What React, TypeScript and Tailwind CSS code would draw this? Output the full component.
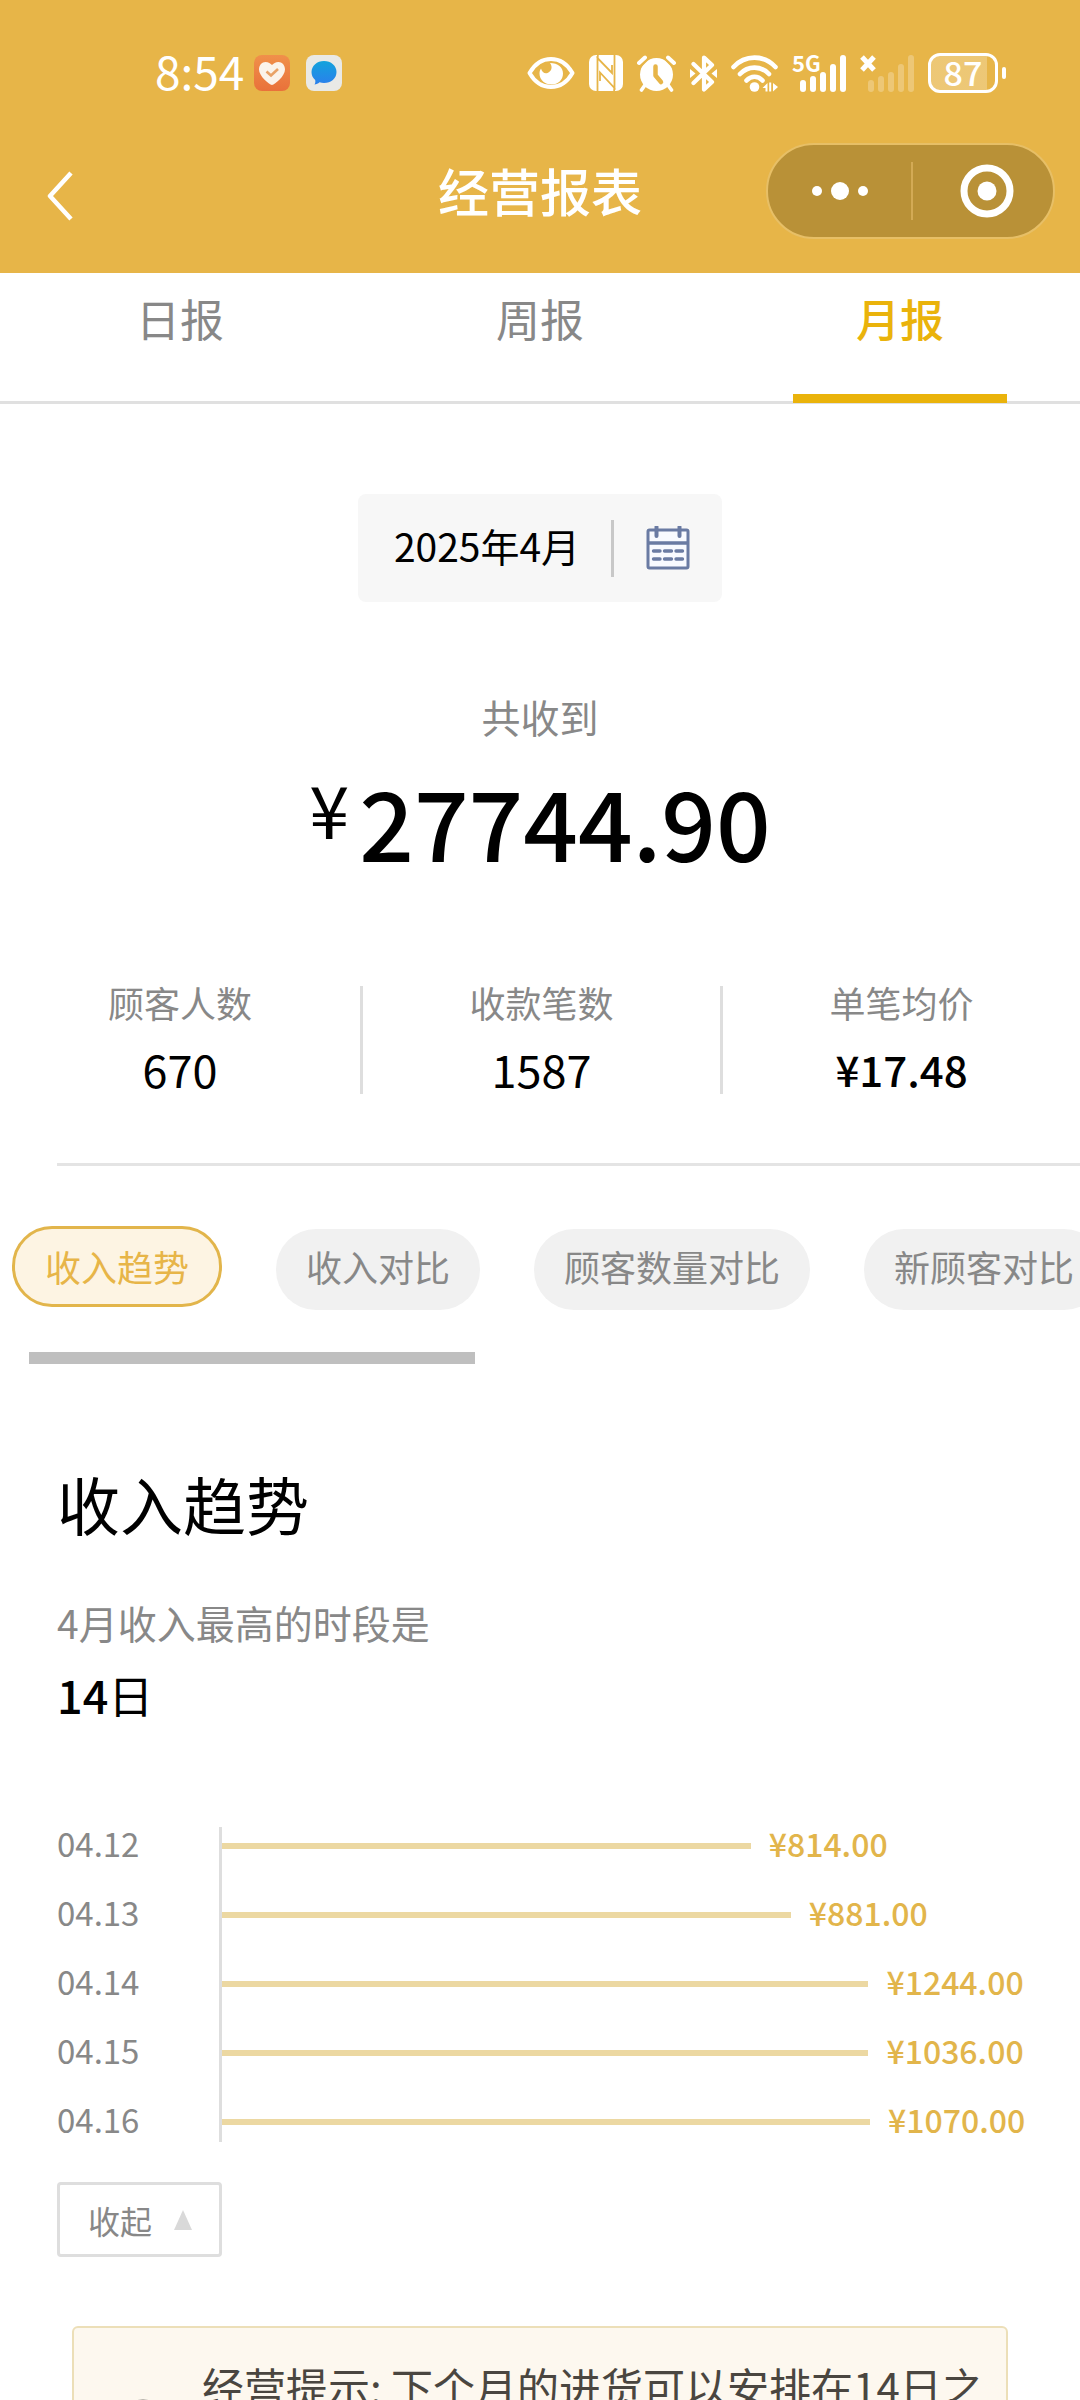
import React, { useState } from "react";

const tabs = ["日报", "周报", "月报"];
const chips = ["收入趋势", "收入对比", "顾客数量对比", "新顾客对比"];

const rows = [
  { date: "04.12", amount: "¥814.00", share: 66 },
  { date: "04.13", amount: "¥881.00", share: 71 },
  { date: "04.14", amount: "¥1244.00", share: 80.7 },
  { date: "04.15", amount: "¥1036.00", share: 80.7 },
  { date: "04.16", amount: "¥1070.00", share: 80.9 },
];

function HeartAppIcon() {
  return (
    <svg width="36" height="36" viewBox="0 0 36 36" aria-hidden="true">
      <defs>
        <linearGradient id="heartBg" x1="0" y1="0" x2="0" y2="1">
          <stop offset="0" stopColor="#f0904a" />
          <stop offset="1" stopColor="#e9713a" />
        </linearGradient>
      </defs>
      <rect width="36" height="36" rx="8" fill="url(#heartBg)" />
      <path d="M18 30C15 29.500 5 21 5 14.500C5 10 8 7 11.500 7C14.500 7 16.500 8.500 18 10C19.500 8.500 21.500 7 24.500 7C28 7 31 10 31 14.500C31 21 21 29.500 18 30Z" fill="#fbf3ea" />
      <path d="M12.500 16.500L17 20.500L24 14" fill="none" stroke="#e9a266" strokeWidth="2.600" />
    </svg>
  );
}

function ChatAppIcon() {
  return (
    <svg width="36" height="36" viewBox="0 0 36 36" aria-hidden="true">
      <defs>
        <linearGradient id="chatBg" x1="0" y1="0" x2="0" y2="1">
          <stop offset="0" stopColor="#12a3dc" />
          <stop offset="1" stopColor="#2b7fec" />
        </linearGradient>
      </defs>
      <rect width="36" height="36" rx="8" fill="#e9e9e6" />
      <path d="M18 6C25 6 30.500 10.800 30.500 17C30.500 23.500 25 28 18 28C16.500 28 15 27.800 13.500 27.300C12 28.600 10.500 29.400 8.500 29.600C9.400 28 9.500 26.500 9.200 25C6.800 23 5.500 20.200 5.500 17C5.500 10.800 11 6 18 6Z" fill="url(#chatBg)" />
    </svg>
  );
}

function EyeIcon() {
  return (
    <svg width="48" height="34" viewBox="0 0 48 34" fill="none" aria-hidden="true">
      <path d="M2.500 17C8 7.500 15.500 3 24 3C32.500 3 40 7.500 45.500 17C40 26.500 32.500 31 24 31C15.500 31 8 26.500 2.500 17Z" stroke="#fff" strokeWidth="4" strokeLinejoin="round" />
      <path d="M23 7C31 7 36 11.500 36 17.500C36 24 31 28.500 24.500 28.500C18 28.500 12.500 24 12.500 17.500C12.500 15.500 13 14 14 12.500C15 16 17.500 18 20.500 17C24.500 15.500 26 11 23 7Z" fill="#fff" />
    </svg>
  );
}

function NfcIcon() {
  return (
    <svg width="34" height="36" viewBox="0 0 34 36" fill="none" aria-hidden="true">
      <rect width="34" height="36" rx="7" fill="#fff" />
      <path d="M8.500 36V3L23 18V10M25.500 0V33L11 17.500V26" stroke="#e7b548" strokeWidth="1.800" />
      <path d="M8.500 3L9 0M25.500 33L25 36" stroke="#e7b548" strokeWidth="1.800" />
    </svg>
  );
}

function AlarmIcon() {
  return (
    <svg width="39" height="37" viewBox="0 0 39 37" fill="none" aria-hidden="true">
      <circle cx="19.500" cy="19.500" r="16.500" fill="#fff" />
      <path d="M0 10L10 0M39 10L29 0" stroke="#e7b548" strokeWidth="9" />
      <path d="M2 8L8 2.500M37 8L31 2.500" stroke="#fff" strokeWidth="4" strokeLinecap="round" />
      <path d="M8 30L4.500 35M31 30L34.500 35" stroke="#fff" strokeWidth="3.600" strokeLinecap="round" />
      <path d="M18.500 11.500V20.500L24 27" stroke="#e7b548" strokeWidth="4.500" strokeLinecap="round" strokeLinejoin="round" />
    </svg>
  );
}

function BluetoothIcon() {
  return (
    <svg width="27" height="37" viewBox="0 0 27 37" fill="none" aria-hidden="true">
      <path d="M3.500 9L22 27L14 34.500V2.500L22 10L3.500 28" stroke="#fff" strokeWidth="4.200" strokeLinejoin="round" strokeLinecap="round" />
      <path d="M0 14L5.500 18.500L0 23ZM27 14L21.500 18.500L27 23Z" fill="#fff" />
    </svg>
  );
}

function WifiIcon() {
  return (
    <svg width="48" height="37" viewBox="0 0 48 37" fill="none" aria-hidden="true">
      <path d="M2.500 12C14 -0.500 33 -0.500 44.500 12" stroke="#fff" strokeWidth="4.600" strokeLinecap="round" />
      <path d="M9 19C17 10.500 30 10.500 38 19" stroke="#fff" strokeWidth="4.600" strokeLinecap="round" />
      <path d="M15.500 25.500C20 20.500 27 20.500 31.500 25.500" stroke="#fff" strokeWidth="4.600" strokeLinecap="round" />
      <circle cx="23.500" cy="32" r="4.800" fill="#fff" />
      <path d="M31.500 33L36.500 28V36.500H34.500V33ZM42 28L47 32L42 36.500Z" fill="#fff" />
      <path d="M39.200 27.500V36.500" stroke="#fff" strokeWidth="2" />
    </svg>
  );
}

function SignalBars() {
  return (
    <svg width="46" height="37" viewBox="0 0 46 37" fill="#fff" aria-hidden="true">
      <rect x="0" y="25" width="6" height="12" rx="3" />
      <rect x="10" y="21" width="6" height="16" rx="3" />
      <rect x="20" y="17" width="6" height="20" rx="3" />
      <rect x="30" y="9" width="6" height="28" rx="3" />
      <rect x="40" y="0" width="6" height="37" rx="3" />
    </svg>
  );
}

function BatteryIcon() {
  return (
    <div className="flex items-center gap-1">
      <div className="flex h-10 w-[70px] rounded-xl border-[3px] border-white bg-linear-to-r from-white/25 from-87% to-transparent to-87%">
        <span className="w-full text-center text-[34px] leading-[32px] font-medium">87</span>
      </div>
      <div className="h-3 w-1 rounded-full bg-white" />
    </div>
  );
}

function CalendarIcon() {
  return (
    <svg width="44" height="44" viewBox="0 0 44 44" fill="none" stroke="#6a7ba3" aria-hidden="true">
      <rect x="2" y="4" width="40" height="38" rx="1.500" fill="#f8faff" strokeWidth="3" />
      <path d="M2 17H42" strokeWidth="3.600" />
      <path d="M10.500 1V10M33.500 1V10" strokeWidth="4" strokeLinecap="round" />
      <path d="M7.500 25H14M18.500 25H25.500M30 25H36.500M7.500 33H14M18.500 33H25.500M30 33H36.500" strokeWidth="3.400" strokeLinecap="round" />
    </svg>
  );
}

function StatusBar() {
  return (
    <div className="flex h-[146px] items-center justify-between pr-[74px] pl-[155px]">
      <div className="flex items-center">
        <span className="w-[99px] pb-1.5 text-[46px] leading-none">8:54</span>
        <div className="flex gap-4">
          <HeartAppIcon />
          <ChatAppIcon />
        </div>
      </div>
      <div className="flex items-center">
        <div className="flex items-center gap-[14px]">
          <EyeIcon />
          <NfcIcon />
          <AlarmIcon />
          <BluetoothIcon />
          <WifiIcon />
        </div>
        <div className="relative ml-[21px]">
          <SignalBars />
          <span className="absolute -top-1 -left-2 text-[22px] leading-none font-bold">5G</span>
        </div>
        <div className="relative mr-[14px] ml-[22px]">
          <div className="opacity-25">
            <SignalBars />
          </div>
          <svg className="absolute top-0 -left-2" width="16" height="17" viewBox="0 0 16 17" aria-hidden="true">
            <path d="M2 2L14 15M14 2L2 15" stroke="#fff" strokeWidth="5" />
          </svg>
        </div>
        <BatteryIcon />
      </div>
    </div>
  );
}

function NavBar() {
  return (
    <div className="relative flex h-[127px] items-start justify-between pr-[25px] pl-[39px]">
      <button type="button" aria-label="返回" className="mt-[17px] p-2">
        <svg width="26" height="50" viewBox="0 0 26 50" fill="none" aria-hidden="true">
          <path d="M24 2L3 25L24 48" stroke="#fff" strokeWidth="4.500" strokeLinejoin="round" />
        </svg>
      </button>
      <h1 className="pointer-events-none absolute inset-x-0 top-[19px] text-center text-[51px] leading-[50px] font-medium">经营报表</h1>
      <div className="-mt-[3px] flex h-24 w-[289px] items-center rounded-full border-2 border-[#e7bf66] bg-[#b99137]">
        <button type="button" aria-label="更多" className="flex h-full w-[143px] items-center justify-center">
          <svg width="58" height="20" viewBox="0 0 58 20" fill="#fff" aria-hidden="true">
            <circle cx="6" cy="10" r="5" />
            <circle cx="29" cy="10" r="9" />
            <circle cx="52" cy="10" r="5" />
          </svg>
        </button>
        <div className="h-[58px] w-0.5 bg-[#d3aa55]" />
        <button type="button" aria-label="关闭" className="flex h-full flex-1 items-center justify-center pl-2">
          <svg width="54" height="54" viewBox="0 0 54 54" fill="none" aria-hidden="true">
            <circle cx="27" cy="27" r="23" stroke="#fff" strokeWidth="7" />
            <circle cx="27" cy="27" r="9.500" fill="#fff" />
          </svg>
        </button>
      </div>
    </div>
  );
}

function Stat({ label, value, strong, divided }: { label: string; value: string; strong?: boolean; divided?: boolean }) {
  return (
    <div className={divided ? "border-l-[3px] border-[#dedede] text-center" : "text-center"}>
      <dt className="text-[36px] leading-8 text-[#888]">{label}</dt>
      <dd className={strong ? "pt-[26px] text-[42px] leading-[50px] font-medium" : "pt-[26px] text-[45px] leading-[50px]"}>{value}</dd>
    </div>
  );
}

export default function App() {
  const [tab, setTab] = useState("月报");
  const [chip, setChip] = useState("收入趋势");
  const [open, setOpen] = useState(true);

  return (
    <div className="flex h-screen flex-col overflow-hidden bg-white font-['Noto_Sans_CJK_SC',sans-serif] text-black">
      <header className="shrink-0 bg-[#e7b548] text-white">
        <StatusBar />
        <NavBar />
      </header>

      <main className="min-h-0 flex-1 overflow-x-hidden overflow-y-auto [scrollbar-width:none]">
        <nav className="grid h-[131px] grid-cols-3 border-b-[3px] border-[#e0e0e0]">
          {tabs.map((t) => (
            <button
              key={t}
              type="button"
              onClick={() => setTab(t)}
              className={
                tab === t
                  ? "relative flex justify-center pt-[23px] text-[44px] leading-[44px] font-medium text-[#eab30b]"
                  : "relative flex justify-center pt-[23px] text-[44px] leading-[44px] text-[#888]"
              }
            >
              {t}
              {tab === t && <span className="absolute inset-x-[73px] -bottom-0.5 h-[9px] bg-[#eab30b]" />}
            </button>
          ))}
        </nav>

        <section className="flex flex-col items-center pt-[90px]">
          <button type="button" className="flex h-[108px] items-center rounded-lg bg-[#f7f7f7] pr-8 pl-9">
            <span className="pb-1.5 text-[39px] leading-10">2025年4月</span>
            <span className="mr-8 ml-[31px] h-[57px] w-[3px] bg-[#c8c8c8]" />
            <CalendarIcon />
          </button>
          <p className="pt-[94px] text-[39px] leading-10 text-[#888]">共收到</p>
          <p className="flex items-start pt-[38px]">
            <span className="text-[72px] leading-[68px]">¥</span>
            <span className="pl-2.5 text-[96px] leading-[94px] font-medium">27744.90</span>
          </p>
        </section>

        <dl className="grid grid-cols-3 pt-[118px]">
          <Stat label="顾客人数" value="670" />
          <Stat label="收款笔数" value="1587" divided />
          <Stat label="单笔均价" value="¥17.48" strong divided />
        </dl>
        <hr className="mt-[69px] ml-[57px] border-t-[3px] border-[#e4e4e4]" />

        <div className="flex items-baseline gap-[54px] overflow-x-auto pt-[60px] pl-3 [scrollbar-width:none]">
          {chips.map((c) => (
            <button
              key={c}
              type="button"
              onClick={() => setChip(c)}
              className={
                chip === c
                  ? "shrink-0 rounded-[40px] border-[3px] border-[#e2b54b] bg-[#fdf4e3] px-[30px] pt-[19px] pb-5 text-[36px] leading-9 text-[#e7b548]"
                  : "shrink-0 rounded-[40px] bg-[#f1f1f1] px-[30px] pt-[19px] pb-[26px] text-[36px] leading-9 text-[#888]"
              }
            >
              {c}
            </button>
          ))}
        </div>
        <div className="mt-[42px] ml-[29px] h-3 w-[41.300%] bg-[#bfbfbf]" />

        <section className="px-[57px] pt-[105px]">
          <h2 className="text-[63px] leading-[68px]">收入趋势</h2>
          <p className="pt-[65px] text-[39px] leading-10 text-[#888]">4月收入最高的时段是</p>
          <p className="pt-[29px] text-[45px] leading-[48px]">
            <span className="font-medium">14</span>日
          </p>

          <div className="mt-[90px] grid grid-cols-[162px_1fr]">
            <div className="text-[33px] leading-[69px] text-[#888]">
              {rows.map((r) => (
                <div key={r.date}>{r.date}</div>
              ))}
            </div>
            <div className="mt-[18px] mb-3 flex flex-col gap-[31px] border-l-[3px] border-[#dedede]">
              {rows.map((r) => (
                <div key={r.date} className="flex h-[38px] items-center">
                  <div className="h-1.5 shrink-0 bg-[#ecd8a2]" style={{ width: `${r.share}%` }} />
                  <span className="pb-1.5 pl-[18px] text-[32px] leading-8 font-medium text-[#e2b54b]">{r.amount}</span>
                </div>
              ))}
            </div>
          </div>

          <button
            type="button"
            onClick={() => setOpen(!open)}
            className="mt-7 flex h-[75px] w-[165px] items-center justify-between rounded border-[3px] border-[#dedede] pr-[27px] pl-7 text-[32px] text-[#888]"
          >
            {open ? "收起" : "展开"}
            <svg width="18" height="20" viewBox="0 0 18 20" aria-hidden="true">
              <path d="M9 0L18 20H0Z" fill="#d9d9d9" />
            </svg>
          </button>
        </section>

        <aside className="mx-[72px] mt-[69px] flex items-start rounded-md border-2 border-[#ecdfb8] bg-[#fdf8ef] pt-7 pr-4 pb-9 pl-10">
          <svg className="mt-[43px] shrink-0" width="58" height="58" viewBox="0 0 58 58" fill="none" stroke="#77736c" strokeWidth="3" aria-hidden="true">
            <circle cx="29" cy="29" r="27" />
            <path d="M29 24V42M29 15V19" />
          </svg>
          <p className="pl-[30px] text-[42px] leading-[60px] text-[#4a4640]">经营提示: 下个月的进货可以安排在14日之</p>
        </aside>
      </main>
    </div>
  );
}
